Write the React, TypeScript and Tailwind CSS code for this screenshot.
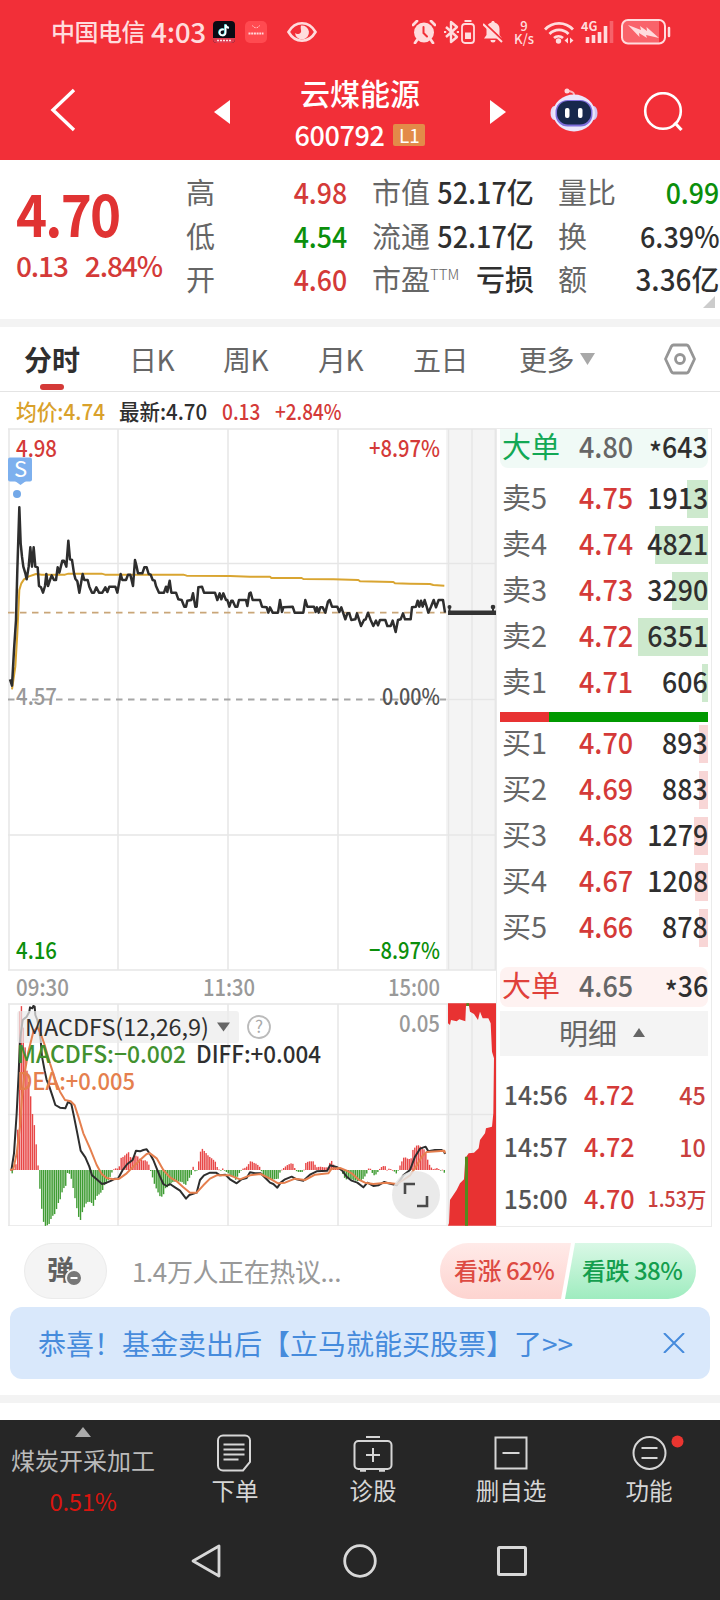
import type { ReactNode } from 'react';

// Curves are stored as x,y pairs at 3 units per pixel.
const PRICE =
  '30,778 36,797 42,690 48,600 52,450 58,262 62,370 66,410 70,440 76,460 80,478 86,440 91,382 96,440 101,382 106,440 113,442 117,498 123,502 129,518 135,498 139,462 144,498 150,480 155,466 162,480 168,480 173,442 178,458 187,422 192,422 199,440 205,362 210,418 216,420 222,460 226,476 232,484 238,518 248,462 253,480 263,480 268,500 276,518 282,518 289,502 297,518 307,518 316,502 322,516 328,500 346,500 352,518 362,462 367,480 378,480 384,464 391,464 399,498 405,420 410,440 414,460 427,460 433,442 440,442 446,462 452,464 458,480 464,482 468,498 477,518 492,518 498,500 502,516 509,482 514,518 528,518 535,538 545,540 553,560 558,560 562,542 574,540 579,520 586,560 590,560 595,502 606,500 612,518 645,518 652,540 659,520 664,538 670,520 678,540 682,540 688,560 694,542 698,542 706,560 712,560 717,540 738,540 742,558 748,520 752,518 758,540 780,540 786,560 800,562 805,578 810,562 818,578 834,578 840,540 846,576 850,562 878,560 884,578 910,578 916,540 922,560 942,560 947,576 951,562 956,578 961,562 968,562 976,578 984,545 989,540 996,560 1012,560 1018,576 1024,562 1036,598 1042,580 1048,580 1054,600 1066,598 1071,580 1083,618 1092,600 1097,598 1104,578 1112,600 1120,618 1128,602 1134,616 1140,600 1156,600 1162,618 1172,618 1178,602 1187,636 1194,600 1202,598 1209,580 1215,598 1232,598 1236,562 1248,560 1253,542 1258,560 1263,542 1268,560 1274,540 1280,560 1285,578 1293,560 1301,540 1308,562 1316,540 1329,540 1335,578';
const AVERAGE =
  '36,808 46,740 52,640 58,510 64,490 72,478 85,470 108,462 125,464 195,464 205,461 305,461 315,464 550,464 560,467 690,468 750,470 810,470 814,474 905,474 910,477 1000,478 1075,480 1080,484 1180,486 1185,490 1230,491 1290,492 1300,495 1333,497';
const DIFF =
  '34,692 42,640 50,520 56,400 60,300 68,240 80,230 88,215 90,202 97,205 100,198 104,200 106,225 112,240 117,270 122,300 126,350 134,392 140,420 148,440 158,470 166,495 180,503 196,505 204,486 214,492 222,530 232,580 242,632 256,652 268,680 276,706 290,718 306,732 320,728 334,722 345,716 354,716 368,690 382,672 398,660 408,632 420,634 430,630 440,628 450,642 460,660 470,685 480,710 490,732 500,738 510,732 525,742 540,752 558,776 568,765 590,758 600,720 612,706 630,698 648,698 660,706 676,704 690,718 710,730 725,718 740,714 750,697 765,700 782,700 794,712 810,728 820,732 832,743 842,728 855,718 875,710 890,718 910,722 930,704 950,694 982,692 990,676 1012,682 1025,690 1040,710 1055,722 1072,728 1090,742 1102,728 1120,738 1135,736 1153,726 1165,730 1190,736 1210,706 1230,690 1245,650 1260,626 1277,620 1285,634 1305,630 1325,630 1332,634 1335,642';
const DEA =
  '30,690 40,688 50,640 60,560 66,470 74,400 84,340 100,275 112,262 122,280 134,315 150,370 166,420 180,455 195,480 212,484 224,496 235,530 250,580 270,625 290,675 305,702 320,714 340,718 358,716 380,700 400,680 420,660 440,642 450,640 470,655 490,690 510,712 530,724 550,742 570,758 590,758 610,736 630,716 650,706 690,706 720,718 750,706 782,702 810,716 834,730 855,728 885,716 915,720 945,704 985,700 995,686 1020,684 1040,692 1055,700 1075,718 1095,728 1120,732 1160,728 1190,732 1210,720 1230,706 1248,680 1265,650 1280,636 1333,632 1335,640';

// Envelope of the MACD histogram: [x, height above the zero line]
const MACD: [number, number][] = [
  [36, -10], [42, 4], [52, 30], [55, 470], [58, 475], [63, 500], [68, 440], [74, 378], [80, 300], [85, 270], [90, 236], [96, 172], [101, 150],
  [107, 88], [112, 34], [118, -44], [123, -100], [128, -150], [135, -168], [146, -164], [155, -140], [166, -130], [172, -104],
  [180, -88], [188, -58], [198, -46], [203, -2], [212, -20], [220, -60], [228, -105], [235, -140], [241, -150], [248, -120],
  [258, -100], [266, -94], [276, -100], [280, -108], [288, -80], [298, -72], [306, -64], [315, -40], [325, -30], [332, -16],
  [338, 0], [345, 5], [356, 4], [362, 36], [370, 40], [378, 48], [386, 54], [392, 34], [400, 40], [410, 44], [418, 34],
  [430, 28], [438, 30], [446, 16], [450, 2], [455, -15], [462, -40], [470, -60], [480, -80], [488, -80], [496, -54],
  [505, -50], [512, -40], [520, -35], [532, -34], [545, -36], [556, -46], [565, -28], [575, -12], [579, 10], [584, -4],
  [590, -2], [596, 28], [602, 60], [606, 64], [615, 54], [625, 42], [636, 34], [645, 26], [652, 6], [660, -2], [668, 5],
  [676, -4], [684, -10], [692, -22], [700, -18], [706, -30], [712, -20], [720, -4], [728, 4], [738, 8], [744, 16], [752, 28],
  [760, 22], [770, 18], [780, 8], [786, -10], [795, -24], [805, -28], [820, -28], [836, -26], [840, -4], [848, 4], [860, 14],
  [872, 20], [880, 18], [886, -2], [895, -6], [910, -6], [915, 20], [925, 26], [940, 26], [948, 8], [960, 10], [972, 8],
  [985, 8], [992, 32], [1000, 16], [1010, 6], [1020, 4], [1028, -12], [1036, -30], [1045, -24], [1060, -30], [1075, -34],
  [1090, -26], [1100, -10], [1108, 12], [1114, -6], [1122, -16], [1130, -12], [1136, 0], [1142, 8], [1154, 14], [1160, 0],
  [1166, 4], [1175, 2], [1182, -4], [1190, -12], [1197, 8], [1205, 26], [1212, 40], [1222, 34], [1232, 32], [1238, 60],
  [1246, 70], [1252, 76], [1258, 72], [1266, 66], [1274, 60], [1280, 38], [1290, 10], [1300, 2], [1310, 6], [1325, -2],
  [1330, 6], [1334, -18],
];

function heightAt(x: number) {
  const i = MACD.findIndex((p) => p[0] >= x);
  if (i <= 0) return MACD[0][1];
  const [x0, h0] = MACD[i - 1];
  const [x1, h1] = MACD[i];
  return h0 + ((h1 - h0) * (x - x0)) / (x1 - x0);
}

const BARS = Array.from({ length: 235 }, (_, i) => 36 + i * 5.54)
  .filter((x) => x < 1335)
  .map((x) => ({ x, h: heightAt(x) }));

const RED = 'text-[#d43a38] scale-x-[0.92]';
const GREEN = 'text-[#0b8f0b] scale-x-[0.92]';
const DARK = 'text-[#2f2f2f] scale-x-[0.93]';

const QUOTES = [
  [
    { label: '高', value: '4.98', style: RED },
    { label: '低', value: '4.54', style: GREEN },
    { label: '开', value: '4.60', style: RED },
  ],
  [
    { label: '市值', value: '52.17亿', style: DARK },
    { label: '流通', value: '52.17亿', style: DARK },
    { label: '市盈', sup: 'TTM', value: '亏损', style: 'text-[#2f2f2f]' },
  ],
  [
    { label: '量比', value: '0.99', style: GREEN },
    { label: '换', value: '6.39%', style: DARK },
    { label: '额', value: '3.36亿', style: 'text-[#2f2f2f] scale-x-[0.96]' },
  ],
];
const QUOTE_WIDTHS = ['ml-[186px] w-[161px]', 'ml-[25px] w-[162px]', 'ml-[24px] w-[161px]'];

const SELLS = [
  { label: '卖5', price: '4.75', volume: '1913', bar: 21 },
  { label: '卖4', price: '4.74', volume: '4821', bar: 53 },
  { label: '卖3', price: '4.73', volume: '3290', bar: 36 },
  { label: '卖2', price: '4.72', volume: '6351', bar: 70 },
  { label: '卖1', price: '4.71', volume: '606', bar: 6 },
];

const BUYS = [
  { label: '买1', price: '4.70', volume: '893', bar: 9 },
  { label: '买2', price: '4.69', volume: '883', bar: 9 },
  { label: '买3', price: '4.68', volume: '1279', bar: 14 },
  { label: '买4', price: '4.67', volume: '1208', bar: 13 },
  { label: '买5', price: '4.66', volume: '878', bar: 9 },
];

const TRADES = [
  { time: '14:56', price: '4.72', volume: '45', size: 'text-[25px]' },
  { time: '14:57', price: '4.72', volume: '10', size: 'text-[25px]' },
  { time: '15:00', price: '4.70', volume: '1.53万', size: 'text-[21px]' },
];

function StatusBar() {
  return (
    <div className="flex h-16 items-center pl-[51px] text-[#ffdcdd]">
      <span className="-mt-[3px] w-[100px] text-2xl leading-none font-medium tracking-[-0.5px]">中国电信</span>
      <span className="-mt-[3px] w-[62px] text-[28px] leading-none font-medium tracking-[-0.3px]">4:03</span>
      <svg className="h-[22px] w-[22px]" viewBox="0 0 22 22">
        <rect width="22" height="22" rx="4" fill="#0b0b14" />
        <path d="M0 17h22v1a4 4 0 0 1-4 4H4a4 4 0 0 1-4-4v-1z" fill="#e03c50" />
        <path d="M4 19.500h14" stroke="#ffe0e2" strokeWidth="1.600" strokeDasharray="2 1" />
        <path d="M10.500 8.500a3 3 0 1 0 1.600 2.600V3.200c.5 2 1.700 3 3.400 3.200" fill="none" stroke="#3fe0e5" strokeWidth="2" />
        <path d="M11 8.800a3 3 0 1 0 1.600 2.600V3.700c.5 2 1.700 3 3.400 3.200" fill="none" stroke="#fff" strokeWidth="1.800" />
      </svg>
      <svg className="ml-[10px] h-[22px] w-[22px]" viewBox="0 0 22 22">
        <rect width="22" height="22" rx="5" fill="#ff4a50" />
        <path d="M7.500 4.500c1 3 6 3 7 0" fill="none" stroke="#ffc8ca" strokeWidth="1" strokeDasharray="1.500 1" />
        <path d="M3.500 12.500h15" stroke="#ffd8da" strokeWidth="2.200" strokeDasharray="2 .7" />
      </svg>
      <svg className="ml-5 h-5 w-[30px]" viewBox="0 0 30 20" fill="none">
        <path d="M1.500 10C5 4 10 1.300 15 1.300S25 4 28.500 10C25 16 20 18.700 15 18.700S5 16 1.500 10z" stroke="currentColor" strokeWidth="2.600" />
        <path d="M14 3.500a7 7 0 1 1-6 7.500c2 2 7 1 6-3-.2-1.500-.5-3 0-4.500z" fill="currentColor" />
      </svg>

      <svg className="ml-[95px] h-6 w-6" viewBox="0 0 24 24" fill="currentColor">
        <circle cx="12" cy="12.500" r="10" />
        <path d="M1 5l4-4M23 5l-4-4M5 20l-2 3M19 20l2 3" stroke="currentColor" strokeWidth="2.800" strokeLinecap="round" />
        <path d="M11.500 7v6l3.500 3.500" fill="none" stroke="#f22f38" strokeWidth="2" strokeLinecap="round" />
      </svg>
      <svg className="ml-2 h-6 w-[15px]" viewBox="0 0 15 24" fill="none" stroke="currentColor" strokeWidth="2.400">
        <path d="M2 7l11 10-6 5V2l6 5L2 17" strokeLinejoin="round" />
        <path d="M1 11v2M14 11v2" />
      </svg>
      <svg className="ml-[2px] h-6 w-[14px]" viewBox="0 0 14 24" fill="none" stroke="currentColor" strokeWidth="1.800">
        <path d="M3.500 1h7" strokeWidth="2" />
        <rect x="1" y="4" width="12" height="19" rx="3" />
        <path d="M4 12.500h6V19H4z" fill="currentColor" stroke="none" />
      </svg>
      <svg className="ml-2 h-6 w-5" viewBox="0 0 20 24">
        <path d="M10 1c-1 0-1.700.7-1.700 1.600C5 3.500 3.500 6 3.500 9v6L1 18.500h18L16.500 15V9c0-3-1.500-5.500-4.800-6.400C11.700 1.700 11 1 10 1zM7.500 20h5a2.500 2.500 0 0 1-5 0z" fill="currentColor" />
        <path d="M1 3l19 18" stroke="#f22f38" strokeWidth="2.500" />
        <path d="M0 4l19 18" stroke="currentColor" strokeWidth="2" />
      </svg>
      <span className="ml-[9px] flex w-[24px] flex-col items-center text-[13px] leading-[13px] font-medium">
        <span>9</span>
        <span>K/s</span>
      </span>
      <svg className="ml-[8px] h-[23px] w-[30px]" viewBox="0 0 30 23" fill="none" stroke="currentColor" strokeWidth="2.800">
        <path d="M1 8.500a19 19 0 0 1 28 0M5.500 13a13 13 0 0 1 19 0M10 17a7 7 0 0 1 9 0" />
        <circle cx="14.500" cy="20" r="2.700" fill="currentColor" stroke="none" />
        <path d="M24 16.500v6l-3.500-3zM26 16.500v6l3.500-3z" fill="currentColor" stroke="none" />
      </svg>
      <svg className="ml-[7px] h-6 w-[33px] overflow-visible" viewBox="0 0 33 24" fill="none" stroke="currentColor" strokeWidth="3.600">
        <text x="0" y="10.500" fill="currentColor" stroke="none" fontSize="12.500" fontWeight="700">4G</text>
        <path d="M6.500 23v-6M12.500 23v-8M18.500 23V12M24.500 23V6" />
        <path d="M30.500 23V1" opacity=".3" />
      </svg>
      <svg className="ml-[7px] h-[26px] w-[50px]" viewBox="0 0 50 26">
        <rect x="1" y="1" width="43" height="23.500" rx="6" fill="#f9636a" />
        <path d="M38 1.500c4 0 6 2 6 6v11c0 4-2 6-6 6z" fill="#f22f38" />
        <rect x="1" y="1" width="43" height="23.500" rx="6" fill="none" stroke="currentColor" strokeWidth="2" />
        <path d="M7 6l13 5-1-4 7 5-.5-4L38 19l-13-3 1 3-8-5 .5 4z" fill="currentColor" />
        <path d="M48 9v8" stroke="currentColor" strokeWidth="2.500" strokeLinecap="round" />
      </svg>
    </div>
  );
}

function Header() {
  return (
    <div className="flex h-24 items-start text-white">
      <svg className="mt-6 ml-[50px] h-[44px] w-[26px]" viewBox="0 0 26 44" fill="none" stroke="currentColor" strokeWidth="3.400">
        <path d="M24 2L3 22l21 20" />
      </svg>
      <svg className="mt-9 ml-[138px] h-6 w-4" viewBox="0 0 16 24" fill="currentColor">
        <path d="M16 0v24L0 12z" />
      </svg>
      <div className="flex w-[260px] flex-col items-center">
        <h1 className="mt-[11px] text-[30px] leading-[34px] font-medium">云煤能源</h1>
        <div className="mt-[10px] flex items-center gap-[9px]">
          <span className="text-[27px] leading-[32px] font-medium tracking-[-0.4px]">600792</span>
          <span className="h-[22px] w-8 rounded-[2px] bg-[#e38b49] text-center text-[19px] leading-[21px]">L1</span>
        </div>
      </div>
      <svg className="mt-9 h-6 w-4" viewBox="0 0 16 24" fill="currentColor">
        <path d="M0 0v24l16-12z" />
      </svg>
      <svg className="mt-6 ml-11 h-11 w-12" viewBox="0 0 48 44">
        <path d="M24 9c1-4-1-5-5-6" fill="none" stroke="#fbb4bd" strokeWidth="2" />
        <circle cx="17" cy="3" r="2.500" fill="#ffd5da" />
        <ellipse cx="4.500" cy="25" rx="4" ry="7" fill="#e2dcf8" />
        <ellipse cx="43.500" cy="25" rx="4" ry="7" fill="#cfc8f5" />
        <ellipse cx="24" cy="25" rx="21" ry="18.500" fill="#ebe6fc" />
        <rect x="5.500" y="12" width="37" height="26.500" rx="12" fill="#7f6fdc" />
        <rect x="7" y="13" width="34" height="23.500" rx="11" fill="#17284c" />
        <rect x="15" y="20" width="4.500" height="10" rx="2" fill="#fff" />
        <rect x="28" y="20" width="4.500" height="10" rx="2" fill="#fff" />
      </svg>
      <svg className="mt-7 ml-[45px] h-10 w-[42px]" viewBox="0 0 42 40" fill="none" stroke="currentColor" strokeWidth="2.600">
        <circle cx="20" cy="19" r="17.800" />
        <path d="M31.500 30.500l7 7.500" strokeWidth="3.200" />
      </svg>
    </div>
  );
}

function QuotePanel() {
  return (
    <section className="relative flex h-[159px]">
      <div className="absolute top-[24px] left-4">
        <p className="origin-left scale-x-[0.91] text-[58px] leading-[56px] font-bold tracking-[-2px] text-[#e03333]">4.70</p>
        <p className="mt-[10px] flex gap-[17px] text-[28px] leading-[30px] font-medium tracking-[-1.1px] text-[#d43a38]">
          <span>0.13</span>
          <span>2.84%</span>
        </p>
      </div>
      {QUOTES.map((column, i) => (
        <dl key={i} className={`${QUOTE_WIDTHS[i]} mt-[10px] shrink-0`}>
          {column.map((q) => (
            <div key={q.label} className="flex h-[43.500px] items-center justify-between text-[29px] leading-none whitespace-nowrap">
              <dt className="flex text-[#666]">
                {q.label}
                {'sup' in q && <span className="text-[15px] leading-[20px] font-light">{q.sup}</span>}
              </dt>
              <dd className={`origin-right font-medium ${q.style}`}>{q.value}</dd>
            </div>
          ))}
        </dl>
      ))}
      <svg className="absolute right-[5px] bottom-[11px] h-3 w-3" viewBox="0 0 12 12">
        <path d="M12 0v12H0z" fill="#ccc" />
      </svg>
    </section>
  );
}

function Tabs() {
  return (
    <nav className="flex h-[65px] items-center border-b border-[#e4e4e4] text-[28px] leading-none tracking-[-0.5px] text-[#666]">
      <div className="relative ml-6 w-[105px] font-bold tracking-normal text-[#2f2f2f]">
        分时
        <span className="absolute -bottom-[17px] left-4 h-[6px] w-6 rounded-full bg-[#d43a38]" />
      </div>
      <span className="w-[94px]">日K</span>
      <span className="w-[95px]">周K</span>
      <span className="w-[95px]">月K</span>
      <span className="w-[106px]">五日</span>
      <span className="w-[61px]">更多</span>
      <svg className="h-3 w-[15px]" viewBox="0 0 15 12">
        <path d="M0 0h15L7.500 12z" fill="#a8a8a8" />
      </svg>
      <svg className="ml-[69px] h-8 w-8" viewBox="0 0 32 32" fill="none" stroke="#969696" strokeWidth="2.800">
        <path d="M9.500 2h13c1 0 1.500.4 2 1.200L30.500 16l-6 12.800c-.5.8-1 1.200-2 1.200h-13c-1 0-1.500-.4-2-1.200L1.500 16l6-12.800c.5-.8 1-1.200 2-1.200z" strokeLinejoin="round" />
        <circle cx="16" cy="16" r="4.500" />
      </svg>
    </nav>
  );
}

function PriceChart() {
  return (
    <svg className="block h-[798px] w-[496px]" viewBox="0 428 496 798" fontSize="23" fontWeight="500">
      <rect x="446" y="428" width="50" height="542" fill="#f4f4f4" />
      <rect x="446" y="1003" width="50" height="223" fill="#f4f4f4" />
      <g stroke="#e6e6e6" strokeWidth="1.500" fill="none">
        <path d="M8 429h488M8 563.500h488M446 699.500h50M8 835h488M8 970h488M8 1004h488M8 1114.500h488M8 1226h488" />
        <path d="M9 429v541M118 429v541M228 429v541M338 429v541M448.500 429v541M472 429v541M495.300 429v541" />
        <path d="M9 1004v222M118 1004v222M228 1004v222M338 1004v222M448.500 1004v222M472 1004v222" />
      </g>
      <path d="M8 612.700h438" stroke="#c9a678" strokeWidth="1.800" strokeDasharray="6.500 5.500" />
      <path d="M8 699.500h438" stroke="#a6a6a6" strokeWidth="1.800" strokeDasharray="6.500 5.500" />
      <g transform="translate(0 420) scale(.33333)" fill="none" strokeLinejoin="round">
        <polyline points={AVERAGE} stroke="#d9a531" strokeWidth="6" />
        <polyline points={PRICE} stroke="#2e2e2e" strokeWidth="7.500" />
      </g>
      <path d="M448 612.700h48" stroke="#333" strokeWidth="4.500" />
      <path d="M449.500 606v6M493 606v6" stroke="#333" strokeWidth="2" />
      <circle cx="449.500" cy="607" r="2" fill="#333" />
      <circle cx="493" cy="607" r="2.300" fill="#333" />

      <text x="16" y="457" fill="#d43a38" textLength="41" lengthAdjust="spacingAndGlyphs">4.98</text>
      <text x="369" y="457" fill="#d43a38" textLength="71" lengthAdjust="spacingAndGlyphs">+8.97%</text>
      <text x="16" y="705" fill="#999" textLength="41" lengthAdjust="spacingAndGlyphs">4.57</text>
      <text x="382" y="705" fill="#555" textLength="58" lengthAdjust="spacingAndGlyphs">0.00%</text>
      <text x="16" y="959" fill="#0b8f0b" textLength="41" lengthAdjust="spacingAndGlyphs">4.16</text>
      <text x="369" y="959" fill="#0b8f0b" textLength="71" lengthAdjust="spacingAndGlyphs">−8.97%</text>
      <g fill="#999">
        <text x="16" y="996" textLength="53" lengthAdjust="spacingAndGlyphs">09:30</text>
        <text x="203" y="996" textLength="52" lengthAdjust="spacingAndGlyphs">11:30</text>
        <text x="388" y="996" textLength="52" lengthAdjust="spacingAndGlyphs">15:00</text>
        <text x="399" y="1032" textLength="41" lengthAdjust="spacingAndGlyphs">0.05</text>
      </g>

      <rect x="8" y="457.500" width="24" height="24" rx="2" fill="#7db0ee" />
      <path d="M15 481h11l-5.500 4z" fill="#7db0ee" />
      <text x="20.500" y="477" textAnchor="middle" fill="#fff" fontSize="22" fontWeight="400">S</text>
      <circle cx="17" cy="494" r="4" fill="#72a8e8" />

      <g transform="translate(0 940) scale(.33333)" fill="none" strokeLinejoin="round">
        {BARS.map((b) => (
          <rect
            key={b.x}
            x={b.x - 1.5}
            y={b.h > 0 ? 690 - b.h : 690}
            width="4.200"
            height={Math.max(Math.abs(b.h), 2)}
            fill={b.h > 0 ? '#e84747' : '#3f9c33'}
          />
        ))}
        <path
          d="M1344 190V250L1350 255 1353 240 1370 244 1378 238 1396 244 1398 198H1407L1410 215 1422 222 1434 240 1440 215 1448 235 1465 235 1472 250 1476 335 1482 355 1480 520 1476 560 1458 565 1455 580 1440 600 1436 625 1422 638 1406 640 1396 655 1392 718 1380 730 1370 750 1350 780 1347 850 1344 857H1488V190z"
          fill="#e83232"
        />
        <path d="M1399 190h8v8h-8zM1395 650h9v207h-9z" fill="#55891e" />
        <polyline points={DIFF} stroke="#2e2e2e" strokeWidth="6" />
      </g>
      <rect x="17" y="1011" width="222" height="32" rx="3" fill="#ececec" opacity=".72" />
      <g transform="translate(0 940) scale(.33333)" fill="none" strokeLinejoin="round">
        <polyline points={DEA} stroke="#e57f4e" strokeWidth="6" />
      </g>
      <g fontSize="23.500">
        <text x="25" y="1036" fill="#2f2f2f" fontWeight="400" textLength="184">MACDFS(12,26,9)</text>
        <path d="M217 1022.500h13l-6.500 9z" fill="#666" />
        <text x="17" y="1063" fill="#42912f" textLength="169" lengthAdjust="spacingAndGlyphs">MACDFS:−0.002</text>
        <text x="196" y="1063" fill="#2f2f2f" textLength="125" lengthAdjust="spacingAndGlyphs">DIFF:+0.004</text>
        <text x="17" y="1090" fill="#e57f4e" textLength="118" lengthAdjust="spacingAndGlyphs">DEA:+0.005</text>
      </g>
      <circle cx="259" cy="1027" r="11" fill="none" stroke="#bbb" strokeWidth="1.800" />
      <text x="259" y="1033" textAnchor="middle" fill="#aaa" fontSize="17" fontWeight="400">?</text>

      <circle cx="416" cy="1195" r="24" fill="#e6e6e6" opacity=".85" />
      <path d="M405 1194v-10h10M427 1196v10h-10" fill="none" stroke="#4a4a4a" strokeWidth="2.600" />
    </svg>
  );
}

function OrderRow({ label, price, volume, bar, barColor }: { label: string; price: string; volume: string; bar: number; barColor: string }) {
  return (
    <div className="relative flex h-[38px] items-center pb-[6px] text-[29px] leading-none">
      <span className={`absolute inset-y-0 right-0 ${barColor}`} style={{ width: bar }} />
      <span className="relative w-[79px] pl-[2px] text-[#666]">{label}</span>
      <span className="relative origin-left scale-x-[0.93] font-medium text-[#d43a38]">{price}</span>
      <span className="relative ml-auto origin-right scale-x-[0.92] font-medium text-[#2f2f2f]">{volume}</span>
    </div>
  );
}

function BigOrder({ price, volume, className }: { price: string; volume: string; className: string }) {
  return (
    <div className={`flex shrink-0 items-center pb-[6px] text-[29px] leading-none ${className}`}>
      <span className="w-[79px] pl-[2px]">大单</span>
      <span className="origin-left scale-x-[0.93] font-medium text-[#666]">{price}</span>
      <span className="ml-auto origin-right scale-x-[0.92] font-medium text-[#2f2f2f]">
        <span className="relative top-[6px]">*</span>
        {volume}
      </span>
    </div>
  );
}

function OrderBook() {
  return (
    <aside className="flex h-[799px] w-[216px] flex-col border border-[#ebebeb] px-[3px]">
      <BigOrder price="4.80" volume="643" className="h-[39px] rounded-b-lg bg-[#f0faf6] text-[#12a855]" />
      <div className="mt-3 flex flex-col gap-2">
        {SELLS.map((row) => (
          <OrderRow key={row.label} {...row} barColor="bg-[#cde9cd]" />
        ))}
      </div>
      <div className="mt-[10px] flex h-[10px] shrink-0">
        <span className="w-[49px] bg-[#e83232]" />
        <span className="flex-1 bg-[#009900]" />
      </div>
      <div className="mt-[3px] flex flex-col gap-2">
        {BUYS.map((row) => (
          <OrderRow key={row.label} {...row} barColor="bg-[#f8d6d6]" />
        ))}
      </div>
      <BigOrder price="4.65" volume="36" className="mt-5 h-10 rounded-lg bg-[#fef2f1] text-[#e0403a]" />
      <div className="mt-1 flex h-[45px] shrink-0 items-center justify-center gap-4 bg-[#f4f4f4] pr-1 pb-[2px] text-[29px] leading-none text-[#666]">
        明细
        <svg className="h-[9px] w-3" viewBox="0 0 12 9">
          <path d="M0 9h12L6 0z" fill="#666" />
        </svg>
      </div>
      <div className="mt-[12px]">
        {TRADES.map((t) => (
          <div key={t.time} className="flex h-[52px] items-center text-[26px] leading-none font-medium">
            <span className="w-[84px] origin-left scale-x-[0.95] pl-1 text-[#555]">{t.time}</span>
            <span className="origin-left scale-x-[0.97] text-[#d43a38]">{t.price}</span>
            <span className={`ml-auto origin-right scale-x-[0.93] pr-[2px] text-[#c9403e] ${t.size}`}>{t.volume}</span>
          </div>
        ))}
      </div>
    </aside>
  );
}

function Discussion() {
  return (
    <div className="mt-[17px] flex h-14 items-center px-6">
      <div className="relative flex h-14 w-[83px] items-center rounded-full border border-[#ebebeb] bg-[#f4f4f4] pb-[6px] pl-[22px] text-[27px] leading-none font-bold text-[#606060]">
        弹
        <svg className="absolute top-[25px] left-[40px] h-[18px] w-[18px]" viewBox="0 0 18 18">
          <circle cx="9" cy="9" r="8" fill="#777" stroke="#f4f4f4" strokeWidth="2" />
          <path d="M5.500 9h7" stroke="#fff" strokeWidth="2" />
        </svg>
      </div>
      <span className="ml-[25px] text-[26px] leading-none tracking-[-0.4px] text-[#999]">1.4万人正在热议...</span>
      <div className="ml-auto flex text-2xl leading-none font-medium tracking-[-0.5px]">
        <span className="flex h-14 w-[131px] items-center rounded-l-[28px] bg-linear-to-b from-[#ffeae8] to-[#fdd4d0] pb-[2px] pl-[14px] text-[#dd4a42] [clip-path:polygon(0_0,100%_0,calc(100%-10px)_100%,0_100%)]">
          看涨 62%
        </span>
        <span className="-ml-[6px] flex h-14 w-[131px] items-center rounded-r-[28px] bg-linear-to-b from-[#d9f8e6] to-[#9eecbf] pb-[2px] pl-[17px] text-[#149e4e] [clip-path:polygon(10px_0,100%_0,100%_100%,0_100%)]">
          看跌 38%
        </span>
      </div>
    </div>
  );
}

function Banner() {
  return (
    <div className="mx-[10px] mt-2 flex h-[72px] items-center justify-between rounded-xl bg-[#d9e8fb] pr-[25px] pl-7 text-[28px] leading-none text-[#468bdc]">
      <span>恭喜！基金卖出后【立马就能买股票】了&gt;&gt;</span>
      <svg className="h-5 w-[22px]" viewBox="0 0 22 20" fill="none" stroke="currentColor" strokeWidth="2">
        <path d="M1 0l20 20M21 0L1 20" />
      </svg>
    </div>
  );
}

function Action({ label, children }: { label: string; children: ReactNode }) {
  return (
    <button className="flex w-[138px] flex-col items-center text-[23.500px] leading-none text-[#d6d6d6]">
      <svg className="h-10 w-12 overflow-visible" viewBox="0 0 48 40" fill="none" stroke="currentColor" strokeWidth="2">
        {children}
      </svg>
      <span className="mt-[6px]">{label}</span>
    </button>
  );
}

function BottomBar() {
  return (
    <footer className="mt-[17px] h-[180px] bg-[#262626]">
      <div className="flex h-[100px]">
        <div className="flex w-[166px] flex-col items-center text-2xl leading-none text-[#bbb]">
          <svg className="mt-[7px] h-[10px] w-4" viewBox="0 0 16 10">
            <path d="M0 10h16L8 0z" fill="#aaa" />
          </svg>
          <span className="mt-[11px]">煤炭开采加工</span>
          <span className="mt-[17px] tracking-[-0.3px] text-[#d9150f]">0.51%</span>
        </div>
        <div className="flex pt-[13px]">
          <Action label="下单">
            <path d="M12 2.500h22a5 5 0 0 1 5 5V29l-7 8.500H12a5 5 0 0 1-5-5v-25a5 5 0 0 1 5-5z" />
            <path d="M12.500 11.500h21M12.500 16.500h21M12.500 21.500h21M12.500 26.500h15" />
          </Action>
          <Action label="诊股">
            <rect x="5.500" y="8" width="37" height="28" rx="4" />
            <path d="M17 4h14M24 15v14M17 22h14" />
            <path d="M11 37.500h6M30 37.500h6" strokeWidth="2.500" />
          </Action>
          <Action label="删自选">
            <path d="M8.500 4.500h31v31h-31zM15.500 20h17" />
          </Action>
          <Action label="功能">
            <circle cx="24.500" cy="20" r="16" />
            <path d="M16.500 15h16M16.500 25h16" />
            <circle cx="52.500" cy="8.500" r="6" fill="#ea3530" stroke="none" />
          </Action>
        </div>
      </div>
      <div className="flex h-[80px] items-center pt-px text-[#d8d8d8]">
        <svg className="ml-[191px] h-[34px] w-[30px]" viewBox="0 0 30 34" fill="none" stroke="currentColor" strokeWidth="2.800">
          <path d="M28 2v30L2 17z" strokeLinejoin="round" />
        </svg>
        <svg className="ml-[122px] h-[34px] w-[34px]" viewBox="0 0 34 34" fill="none" stroke="currentColor" strokeWidth="2.800">
          <circle cx="17" cy="17" r="15.300" />
        </svg>
        <svg className="ml-[120px] h-[30px] w-[30px]" viewBox="0 0 30 30" fill="none" stroke="currentColor" strokeWidth="3">
          <rect x="1.500" y="1.500" width="27" height="27" rx="1" />
        </svg>
      </div>
    </footer>
  );
}

export default function App() {
  return (
    <div className="h-[1600px] w-[720px] overflow-hidden bg-white font-['Noto_Sans_CJK_SC',sans-serif]">
      <header className="bg-[#f22f38]">
        <StatusBar />
        <Header />
      </header>
      <QuotePanel />
      <div className="h-2 bg-[#f3f3f3]" />
      <Tabs />
      <div className="flex h-[36px] items-center pl-4 text-[22px] leading-none font-medium whitespace-nowrap">
        <span className="w-[103px] origin-left scale-x-[0.94] text-[#d9a12b]">均价:4.74</span>
        <span className="w-[103px] origin-left scale-x-[0.93] text-[#2f2f2f]">最新:4.70</span>
        <span className="w-[53px] origin-left scale-x-[0.87] text-[#d43a38]">0.13</span>
        <span className="origin-left scale-x-[0.86] text-[#d43a38]">+2.84%</span>
      </div>
      <div className="flex h-[798px] items-start">
        <PriceChart />
        <OrderBook />
      </div>
      <Discussion />
      <Banner />
      <div className="mt-4 h-2 bg-[#f3f3f3]" />
      <BottomBar />
    </div>
  );
}
